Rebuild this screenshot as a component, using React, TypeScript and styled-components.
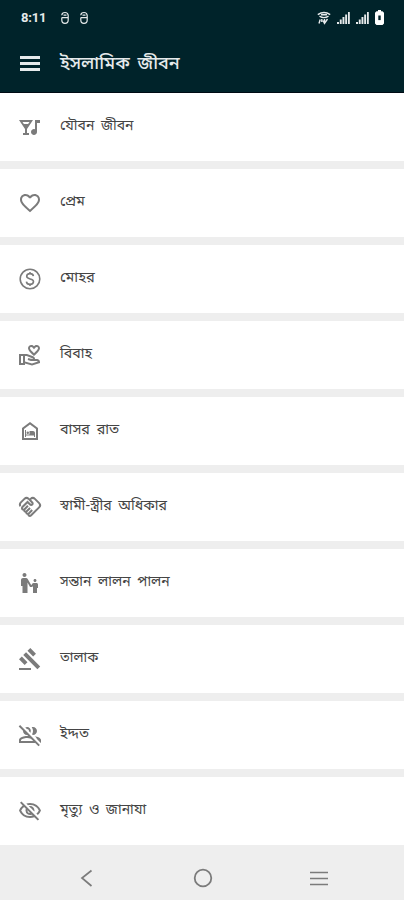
import React from "react";
import styled, { createGlobalStyle } from "styled-components";
import {
  MdOutlineNightlife,
  MdFavoriteBorder,
  MdOutlineVolunteerActivism,
  MdOutlineNightShelter,
  MdOutlineHandshake,
  MdEscalatorWarning,
  MdOutlineGavel,
  MdOutlineGroupOff,
  MdOutlineVisibilityOff,
} from "react-icons/md";

const GlobalStyle = createGlobalStyle`
  * { box-sizing: border-box; }
  body { margin: 0; background: #eeeeee; font-family: "Noto Sans Bengali", "Noto Sans", "Liberation Sans", sans-serif; }
`;

const Screen = styled.div`
  width: 404px;
  height: 900px;
  display: flex;
  flex-direction: column;
  overflow: hidden;
  background: #eeeeee;
`;

const Header = styled.header`
  flex: none;
  height: 93px;
  background: #00232a;
  color: #e6eaeb;
  border-bottom: 1px solid #000b14;
`;

const StatusBar = styled.div`
  height: 35px;
  padding: 0 20px 0 21px;
  display: flex;
  align-items: center;
  justify-content: space-between;
`;

const StatusGroup = styled.div<{ $gap: number }>`
  display: flex;
  align-items: center;
  gap: ${(p) => p.$gap}px;
`;

const Clock = styled.span`
  width: 25px;
  margin-right: 5px;
  font: bold 13px/16px Roboto, sans-serif;
  letter-spacing: -0.2px;
`;

const TitleBar = styled.div`
  height: 57px;
  padding-left: 20px;
  display: flex;
  align-items: center;
  gap: 20px;
`;

const Title = styled.h1`
  margin: 0;
  font-size: 18px;
  font-weight: 500;
  line-height: 30px;
  padding-top: 1px;
  word-spacing: 3px;
  white-space: nowrap;
`;

const List = styled.ul`
  flex: none;
  margin: 0;
  padding: 0;
  list-style: none;
  display: flex;
  flex-direction: column;
  gap: 8px;
`;

const Row = styled.li`
  height: 68px;
  padding: 0 18px;
  display: flex;
  align-items: center;
  gap: 18px;
  background: #ffffff;
  color: #7b7b7b;
`;

const Label = styled.span<{ $size: number }>`
  font-size: ${(p) => p.$size}px;
  line-height: 24px;
  word-spacing: 3px;
  color: #444444;
  white-space: nowrap;
`;

const NavBar = styled.nav`
  flex: 1;
  padding: 11px 74px 0 75px;
  display: flex;
  align-items: flex-start;
  justify-content: space-between;
  color: #7b7b7b;
`;

const DollarCoin = ({ size }: { size: number }) => (
  <svg width={size} height={size} viewBox="0 0 24 24" fill="none" stroke="currentColor" strokeWidth="1.6">
    <circle cx="12" cy="12" r="9.8" />
    <path d="M15.4 9.2C15.2 7.4 13.9 6.6 12 6.6S8.7 7.6 8.7 9.3c0 3.6 6.8 1.8 6.8 5.3 0 1.7-1.5 2.8-3.5 2.8s-3.4-1-3.6-2.8M12 5v1.6M12 17.4V19" />
  </svg>
);

const items: { label: string; icon: React.ComponentType<{ size: number }>; size: number }[] = [
  { label: "যৌবন জীবন", icon: MdOutlineNightlife, size: 14 },
  { label: "প্রেম", icon: MdFavoriteBorder, size: 14.3 },
  { label: "মোহর", icon: DollarCoin, size: 14.7 },
  { label: "বিবাহ", icon: MdOutlineVolunteerActivism, size: 14.2 },
  { label: "বাসর রাত", icon: MdOutlineNightShelter, size: 14.4 },
  { label: "স্বামী-স্ত্রীর অধিকার", icon: MdOutlineHandshake, size: 14.2 },
  { label: "সন্তান লালন পালন", icon: MdEscalatorWarning, size: 14 },
  { label: "তালাক", icon: MdOutlineGavel, size: 13.8 },
  { label: "ইদ্দত", icon: MdOutlineGroupOff, size: 14.2 },
  { label: "মৃত্যু ও জানাযা", icon: MdOutlineVisibilityOff, size: 14 },
];

const AppBadge = () => (
  <svg width="10" height="14" viewBox="0 0 10 14" fill="none" stroke="currentColor" strokeWidth="1.2">
    <path d="M1.8 4.2Q2 1.5 5 1.5T8.2 4.5V9Q8.2 12.4 5 12.4T1.8 9V7M1.5 6.6H8M3.5 4.2H6.5" />
  </svg>
);

const Wifi = () => (
  <svg width="14" height="14" viewBox="0 0 14 14" fill="none" stroke="currentColor" strokeWidth="1.4">
    <path d="M.8 3.6Q7-.6 13.2 3.6M2.5 5.2Q7 8 11.5 5.2M4 3.8h6" />
    <path d="M2 12.5 3.2 8.5M4.8 11V8M7.5 8v4.5M6 9.5l1.5 2.8L10.5 8" />
  </svg>
);

const Signal = () => (
  <svg width="13" height="12" viewBox="0 0 13 12" fill="currentColor">
    <path d="M0 10h2v2H0zM2.8 7.5h1.9V12H2.8zM5.5 5h1.9v7H5.5zM8.2 2.5h1.9V12H8.2zM11 0h1.8v12H11z" />
  </svg>
);

const Battery = () => (
  <svg width="9" height="15" viewBox="0 0 9 15">
    <path fill="#fff" d="M3 0h3v1.3h1.5L9 2.8v10.7L7.5 15h-6L0 13.5V2.8l1.5-1.5H3z" />
    <path fill="#00232a" d="M3.3 5.5h2.4v4.6H3.3z" />
  </svg>
);

export default function App() {
  return (
    <>
      <GlobalStyle />
      <Screen>
        <Header>
          <StatusBar>
            <StatusGroup $gap={9}>
              <Clock>8:11</Clock>
              <AppBadge />
              <AppBadge />
            </StatusGroup>
            <StatusGroup $gap={6}>
              <Wifi />
              <Signal />
              <Signal />
              <Battery />
            </StatusGroup>
          </StatusBar>
          <TitleBar>
            <svg width="20" height="15" viewBox="0 0 20 15" fill="currentColor">
              <path d="M0 0h20v3H0zM0 6h20v3H0zM0 12h20v3H0z" />
            </svg>
            <Title>ইসলামিক জীবন</Title>
          </TitleBar>
        </Header>
        <List>
          {items.map(({ label, icon: Icon, size }) => (
            <Row key={label}>
              <Icon size={24} />
              <Label $size={size}>{label}</Label>
            </Row>
          ))}
        </List>
        <NavBar>
          <svg width="22" height="44" viewBox="0 0 22 44" fill="none" stroke="currentColor" strokeWidth="1.7">
            <path d="M16.5 14.5 7 22l9.5 8" />
          </svg>
          <svg width="22" height="44" viewBox="0 0 22 44" fill="none" stroke="currentColor" strokeWidth="1.8">
            <circle cx="11" cy="22" r="8.3" />
          </svg>
          <svg width="22" height="44" viewBox="0 0 22 44" fill="none" stroke="currentColor" strokeWidth="1.7">
            <path d="M2 16.5h18M2 22.5h18M2 28.5h18" />
          </svg>
        </NavBar>
      </Screen>
    </>
  );
}
